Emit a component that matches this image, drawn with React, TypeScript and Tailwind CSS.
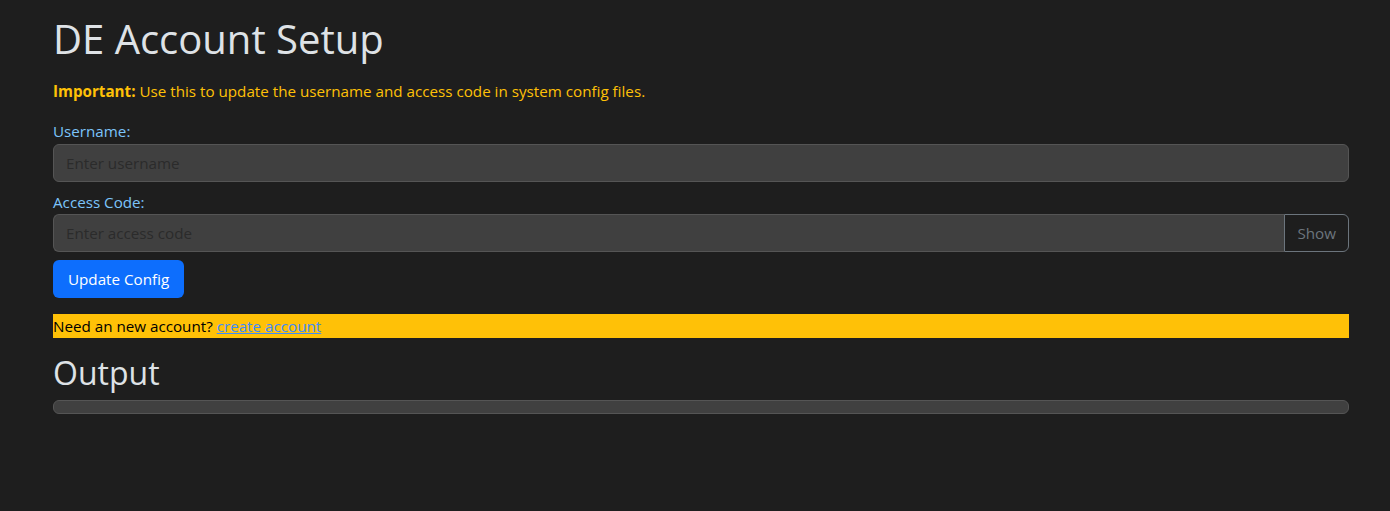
import React, { useState } from 'react';

const font = { fontFamily: '"Open Sans", "Noto Sans", sans-serif' };

export default function App() {
  const [show, setShow] = useState(false);

  return (
    <div className="min-h-[511px] w-full bg-[#1e1e1e] text-[#dee2e6]" style={font}>
      <div className="ml-[53px] w-[1296px] pt-[15px]">
        <h1 className="mb-4 text-[40px] leading-[48px] font-normal text-[#dee2e6]">DE Account Setup</h1>

        <p className="mb-4 text-[15.2px] leading-6 text-[#ffc107]">
          <strong className="font-bold">Important:</strong> Use this to update the username and access code in system config files.
        </p>

        <label className="block text-[15.2px] leading-6 text-[#7cc4fa]">Username:</label>
        <input
          type="text"
          placeholder="Enter username"
          className="mt-px mb-2 block h-[38px] w-full rounded-md border border-[#555] bg-[#404040] px-3 text-[15.2px] text-[#dee2e6] outline-none placeholder:text-[#2b2b2b]"
        />

        <label className="block text-[15.2px] leading-6 text-[#7cc4fa]">Access Code:</label>
        <div className="flex h-[38px] w-full">
          <input
            type={show ? 'text' : 'password'}
            placeholder="Enter access code"
            className="h-full flex-1 rounded-l-md border border-r-0 border-[#555] bg-[#404040] px-3 text-[15.2px] text-[#dee2e6] outline-none placeholder:text-[#2b2b2b]"
          />
          <button
            onClick={() => setShow(!show)}
            className="h-full rounded-r-md border border-[#6c757d] bg-transparent px-3 text-[15.2px] text-[#6c757d]"
          >
            Show
          </button>
        </div>

        <button className="mt-2 h-[38px] rounded-md bg-[#0d6efd] px-[15px] text-[15.2px] text-white">
          Update Config
        </button>

        <div className="mt-4 bg-[#ffc107] text-[15.2px] leading-6 text-black">
          Need an new account?{' '}
          <a href="#" className="text-[#3d8bfd] underline">create account</a>
        </div>

        <h2 className="mt-4 mb-2 text-[32px] leading-[38px] font-normal text-[#dee2e6]">Output</h2>
        <div className="h-[14px] w-full rounded-md border border-[#555] bg-[#404040]"></div>
      </div>
    </div>
  );
}
